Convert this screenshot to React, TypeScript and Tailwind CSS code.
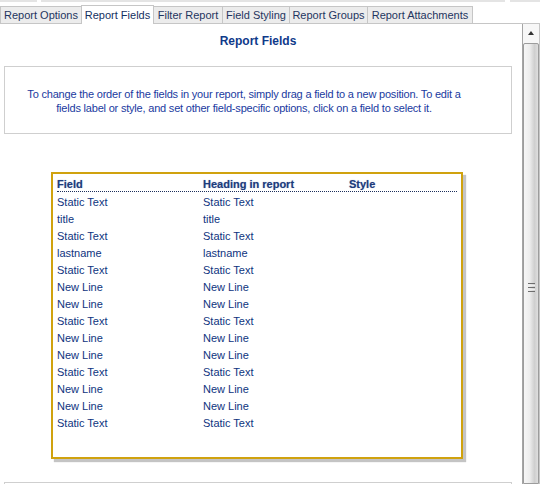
import React from "react";

const tabs = [
  { label: "Report Options", w: 81 },
  { label: "Report Fields", w: 72, active: true },
  { label: "Filter Report", w: 69 },
  { label: "Field Styling", w: 67 },
  { label: "Report Groups", w: 78 },
  { label: "Report Attachments", w: 105 },
];

const rows = [
  "Static Text",
  "title",
  "Static Text",
  "lastname",
  "Static Text",
  "New Line",
  "New Line",
  "Static Text",
  "New Line",
  "New Line",
  "Static Text",
  "New Line",
  "New Line",
  "Static Text",
];

export default function App() {
  return (
    <div
      className="w-[550px] h-[484px] overflow-hidden bg-white relative"
      style={{ fontFamily: '"Liberation Sans", Arial, sans-serif' }}
    >
      {/* top strip */}
      <div className="flex h-[5px] items-start">
        <div className="h-[2px] w-[37px] bg-[#e4e4e4]" />
        <div className="h-[2px] w-[4px]" />
        <div className="h-[2px] w-[464px] bg-[#e4e4e4]" />
        <div className="h-[2px] w-[5px]" />
        <div className="h-[2px] w-[30px] bg-[#e4e4e4]" />
      </div>
      {/* tabs */}
      <div className="flex items-end h-[19px] relative z-10">
        {tabs.map((t) =>
          t.active ? (
            <div
              key={t.label}
              className="h-[19px] bg-white border border-b-0 border-[#c6c6c6] text-[11px] leading-[17px] text-center text-[#15305f] pt-[1px] -ml-[1px]"
              style={{ width: t.w + 1 }}
            >
              {t.label}
            </div>
          ) : (
            <div
              key={t.label}
              className="h-[18px] bg-[#ececec] border border-[#c6c6c6] text-[11px] leading-[16px] text-center text-[#1f3560] -ml-[1px] first:ml-0"
              style={{ width: t.w + 1 }}
            >
              {t.label}
            </div>
          )
        )}
      </div>
      {/* panel */}
      <div className="flex w-[540px] h-[461px] border-t border-r border-[#c6c6c6] -mt-[1px]">
        <div className="flex-1 flex flex-col px-[4px] pt-[10px] bg-white overflow-hidden">
          <div className="shrink-0 text-center text-[12px] leading-[14px] font-bold text-[#0f3a8a] pr-[6px]">
            Report Fields
          </div>
          <div className="shrink-0 mt-[18px] w-[508px] h-[68px] border border-[#cfcfcf] flex flex-col items-center justify-center pr-[28px] pt-[2px] text-[11px] leading-[14px] text-[#1a3aa0] text-center tracking-[-0.2px]">
            <div>
              To change the order of the fields in your report, simply drag a field to a new position. To edit a
            </div>
            <div>
              fields label or style, and set other field-specific options, click on a field to select it.
            </div>
          </div>
          <div className="shrink-0 mt-[38px] ml-[47px] w-[412px] h-[287px] border-2 border-[#d0a20e] shadow-[3px_3px_1px_#c4c4c4] px-[4px] pt-[3px]">
            <div
              className="flex h-[15px] border-b border-dotted border-[#1c2f5c] text-[11px] leading-[14px] font-bold text-[#1d3c7c]"
              style={{ textShadow: "0 0 1px rgba(60,90,160,0.55)" }}
            >
              <div className="w-[146px]">Field</div>
              <div className="w-[146px]">Heading in report</div>
              <div>Style</div>
            </div>
            <div className="pt-[2px]">
              {rows.map((r, i) => (
                <div key={i} className="flex h-[17px] text-[11px] leading-[17px] text-[#0e3480]">
                  <div className="w-[146px]">{r}</div>
                  <div className="w-[146px]">{r}</div>
                  <div />
                </div>
              ))}
            </div>
          </div>
          <div className="shrink-0 mt-[23px] w-[508px] h-[40px] border border-[#cfcfcf]" />
        </div>
        {/* scrollbar */}
        <div className="w-[17px] border-l border-[#a5a5a5] flex flex-col bg-[#f0f0f0]">
          <div className="h-[19px] shrink-0 flex items-center justify-center bg-[#f7f7f7]">
            <div className="w-0 h-0 border-l-[3px] border-r-[3px] border-b-[4px] border-l-transparent border-r-transparent border-b-[#333] mt-[-1px]" />
          </div>
          <div className="flex-1 border border-[#9c9c9c] rounded-t-[2px] bg-[linear-gradient(to_right,#f6f6f6_0%,#ededed_40%,#cfcfcf_75%,#dedede_100%)] flex flex-col items-center pt-[239px]">
            <div className="flex flex-col gap-[1px]">
              <div className="w-[7px] h-[1px] bg-[#6e6e6e]" />
              <div className="w-[7px] h-[1px] bg-[#eee]" />
              <div className="w-[7px] h-[1px] bg-[#6e6e6e]" />
              <div className="w-[7px] h-[1px] bg-[#eee]" />
              <div className="w-[7px] h-[1px] bg-[#6e6e6e]" />
            </div>
          </div>
        </div>
      </div>
    </div>
  );
}
